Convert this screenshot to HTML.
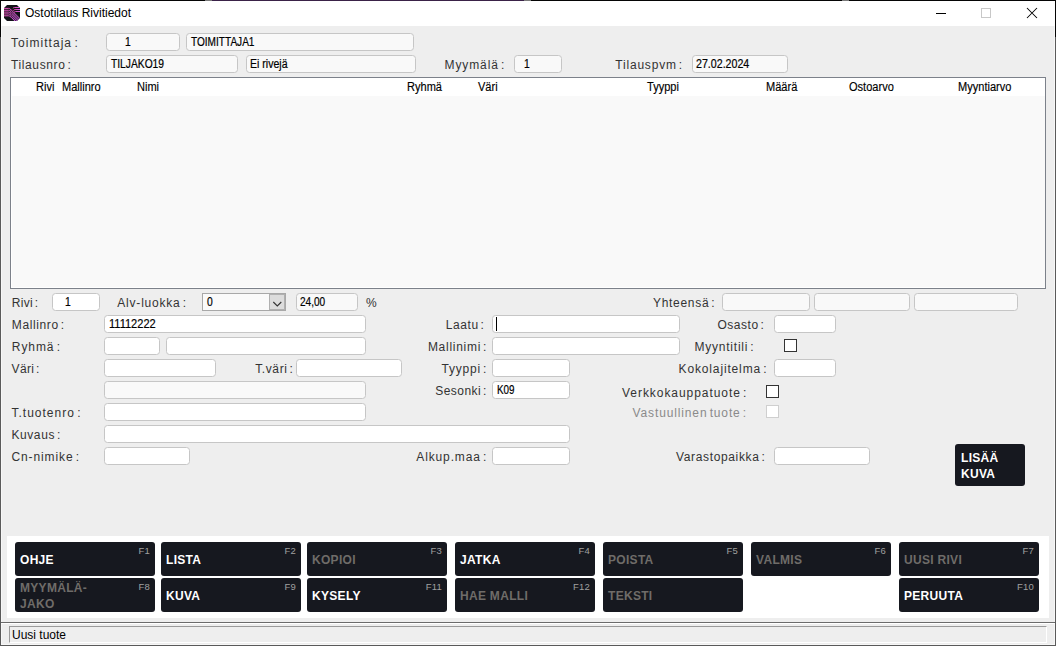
<!DOCTYPE html><html><head><meta charset="utf-8"><title>Ostotilaus Rivitiedot</title><style>
*{margin:0;padding:0;box-sizing:border-box}
html,body{width:1056px;height:646px;overflow:hidden;background:#eeeeee;font-family:"Liberation Sans",sans-serif}
div{position:absolute;white-space:nowrap}
.lbl{font-size:12px;line-height:14px;color:#333}
.dat{font-size:12px;line-height:14px;color:#000;-webkit-text-stroke:0.2px #000;transform-origin:0 0}
.hdr{transform-origin:0 0}
.hdr{font-size:12px;line-height:14px;color:#000;-webkit-text-stroke:0.15px #000}
.box{border:1px solid #c6c6c6;border-radius:3.5px;background:#fff}
.box.dis{background:#f9f9f9}
.chk{border:1px solid #333;background:#fff}
.btn{background:#16181f;border-radius:3px}
.bt{font-size:12px;line-height:16px;font-weight:bold;color:#fff;letter-spacing:0.3px}
.bt.d{color:#6f6c69}
.fk{font-size:9.5px;line-height:12px;color:#a0a0a0;letter-spacing:0.2px}
</style></head><body>
<div style="left:0;top:0;width:1056px;height:646px;border:1px solid #5a5a5a;border-top-color:#22102a"></div>
<div style="left:1px;top:644px;width:1054px;height:1px;background:#f7f7f7"></div>
<div style="left:0px;top:0;width:205px;height:1px;background:#050505"></div>
<div style="left:205px;top:0;width:7px;height:1px;background:#7a7a7a"></div>
<div style="left:212px;top:0;width:312px;height:1px;background:#3a2248"></div>
<div style="left:524px;top:0;width:7px;height:1px;background:#7a7a7a"></div>
<div style="left:531px;top:0;width:311px;height:1px;background:#050505"></div>
<div style="left:842px;top:0;width:7px;height:1px;background:#7a7a7a"></div>
<div style="left:849px;top:0;width:207px;height:1px;background:#050505"></div>
<div style="left:0;top:0;width:1px;height:37px;background:#050505"></div>
<div style="left:1055px;top:0;width:1px;height:37px;background:#050505"></div>
<div style="left:1px;top:1px;width:1054px;height:25px;background:#fff"></div>
<div style="left:1px;top:26px;width:1px;height:619px;background:#f7f7f7"></div>
<div style="left:1054px;top:26px;width:1px;height:619px;background:#f7f7f7"></div>
<svg style="position:absolute;left:4px;top:5px" width="16" height="16" viewBox="0 0 16 16">
<defs><linearGradient id="g" x1="0" x2="1" y1="0" y2="0"><stop offset="0" stop-color="#e64fb0"/><stop offset="1" stop-color="#cf5be9"/></linearGradient>
<clipPath id="c"><path d="M3 0 H13 L16 3 V13 L13 16 H3 L0 13 V3 Z"/></clipPath></defs>
<g clip-path="url(#c)"><rect x="0" y="0" width="16" height="16" fill="#121218"/>
<g fill="none" stroke="url(#g)" stroke-width="1.0">
<path d="M-0.5 3.40 L4.5 3.40 Q5.7 3.40 7.1 4.80 L18.8 16.5"/>
<path d="M-0.5 5.25 L4.5 5.25 Q5.7 5.25 7.1 6.65 L16.9 16.5"/>
<path d="M-0.5 7.10 L4.5 7.10 Q5.7 7.10 7.1 8.50 L15.1 16.5"/>
<path d="M-0.5 8.95 L4.5 8.95 Q5.7 8.95 7.1 10.35 L13.2 16.5"/>
<path d="M-0.5 10.80 L4.5 10.80 Q5.7 10.80 7.1 12.20 L11.4 16.5"/>
<path d="M16.5 2.5 L10.5 2.5 Q9.5 2.5 8.8 3.5"/>
<path d="M16.5 4.5 L11.1 4.5 Q10.1 4.5 9.4 5.5"/>
<path d="M16.5 6.5 L11.7 6.5 Q10.7 6.5 10.0 7.5"/>
</g></g></svg>
<div style="left:25px;top:6px;font-size:12px;line-height:14px;color:#000">Ostotilaus Rivitiedot</div>
<div style="left:936px;top:13px;width:10px;height:1px;background:#000"></div>
<div style="left:981px;top:8px;width:10px;height:10px;border:1px solid #c8c8c8"></div>
<svg style="position:absolute;left:1026px;top:7px" width="12" height="12" viewBox="0 0 12 12"><path d="M1 1 L11 11 M11 1 L1 11" stroke="#000" stroke-width="1.05"/></svg>
<div class="lbl" style="top:36px;left:11.00px;letter-spacing:1.036px;word-spacing:-2.0px;">Toimittaja :</div>
<div class="box dis" style="left:106px;top:33px;width:74px;height:18px"></div>
<div class="dat" style="left:124.5px;top:35px;transform:scaleX(0.86)">1</div>
<div class="box dis" style="left:186px;top:33px;width:228px;height:18px"></div>
<div class="dat" style="left:191px;top:35px;transform:scaleX(0.84)">TOIMITTAJA1</div>
<div class="lbl" style="top:58px;left:11.00px;letter-spacing:0.620px;word-spacing:-2.0px;">Tilausnro :</div>
<div class="box dis" style="left:106px;top:55px;width:132px;height:18px"></div>
<div class="dat" style="left:111px;top:57px;transform:scaleX(0.855)">TILJAKO19</div>
<div class="box dis" style="left:246px;top:55px;width:170px;height:18px"></div>
<div class="dat" style="left:250px;top:57px;transform:scaleX(0.88)">Ei rivejä</div>
<div class="lbl" style="top:58px;left:444.60px;letter-spacing:0.875px;word-spacing:-2.0px;">Myymälä :</div>
<div class="box dis" style="left:514px;top:55px;width:48px;height:18px"></div>
<div class="dat" style="left:524px;top:57px;transform:scaleX(0.86)">1</div>
<div class="lbl" style="top:58px;left:615.30px;letter-spacing:0.800px;word-spacing:-2.0px;">Tilauspvm :</div>
<div class="box dis" style="left:692px;top:55px;width:96px;height:18px"></div>
<div class="dat" style="left:696px;top:57px;transform:scaleX(0.887)">27.02.2024</div>
<div style="left:10px;top:77px;width:1036px;height:212px;border:1px solid #7c818a;background:#f9f9f9"></div>
<div style="left:11px;top:78px;width:1034px;height:18px;background:#fff"></div>
<div style="left:11px;top:96px;width:1px;height:192px;background:#fff"></div>
<div style="left:11px;top:287px;width:1034px;height:1px;background:#fff"></div>
<div class="hdr" style="left:36px;top:80px;transform:scaleX(0.92)">Rivi</div>
<div class="hdr" style="left:62px;top:80px;transform:scaleX(0.92)">Mallinro</div>
<div class="hdr" style="left:137px;top:80px;transform:scaleX(0.92)">Nimi</div>
<div class="hdr" style="left:407px;top:80px;transform:scaleX(0.92)">Ryhmä</div>
<div class="hdr" style="left:478px;top:80px;transform:scaleX(0.92)">Väri</div>
<div class="hdr" style="left:646.7px;top:80px;transform:scaleX(0.92)">Tyyppi</div>
<div class="hdr" style="left:766px;top:80px;transform:scaleX(0.92)">Määrä</div>
<div class="hdr" style="left:849px;top:80px;transform:scaleX(0.92)">Ostoarvo</div>
<div class="hdr" style="left:958px;top:80px;transform:scaleX(0.92)">Myyntiarvo</div>
<div class="lbl" style="top:296px;left:11.80px;letter-spacing:0.320px;word-spacing:-2.0px;">Rivi :</div>
<div class="box" style="left:52px;top:293px;width:48px;height:18px"></div>
<div class="dat" style="left:65px;top:295px;transform:scaleX(0.86)">1</div>
<div class="lbl" style="top:296px;left:117.30px;letter-spacing:0.791px;word-spacing:-2.0px;">Alv-luokka :</div>
<div style="left:202px;top:293px;width:84px;height:18px;border:1px solid #a8a8a8;background:#fafafa"></div>
<div style="left:269px;top:294px;width:16px;height:16px;border:1px solid #b0b0b0;background:#dcdcdc"></div>
<svg style="position:absolute;left:272px;top:299.5px" width="11" height="8" viewBox="0 0 11 8"><path d="M1.3 2 L5.3 6 L9.3 2" fill="none" stroke="#333" stroke-width="1.1"/></svg>
<div class="dat" style="left:207px;top:295px;transform:scaleX(0.86)">0</div>
<div class="box dis" style="left:296px;top:293px;width:62px;height:18px"></div>
<div class="dat" style="left:300px;top:295px;transform:scaleX(0.84)">24,00</div>
<div class="lbl" style="top:296px;left:366px;">%</div>
<div class="lbl" style="top:296px;left:653.00px;letter-spacing:0.700px;word-spacing:-2.0px;">Yhteensä :</div>
<div class="box dis" style="left:722px;top:293px;width:88px;height:18px"></div>
<div class="box dis" style="left:814px;top:293px;width:96px;height:18px"></div>
<div class="box dis" style="left:914px;top:293px;width:104px;height:18px"></div>
<div class="lbl" style="top:318px;left:11.80px;letter-spacing:0.622px;word-spacing:-2.0px;">Mallinro :</div>
<div class="box" style="left:104px;top:315px;width:262px;height:18px"></div>
<div class="dat" style="left:108.5px;top:317px;transform:scaleX(0.92)">11112222</div>
<div class="lbl" style="top:318px;left:445.80px;letter-spacing:0.567px;word-spacing:-2.0px;">Laatu :</div>
<div class="box" style="left:492px;top:315px;width:188px;height:18px"></div>
<div style="left:496px;top:317px;width:1px;height:14px;background:#000"></div>
<div class="lbl" style="top:318px;left:717.40px;letter-spacing:0.529px;word-spacing:-2.0px;">Osasto :</div>
<div class="box" style="left:774px;top:315px;width:62px;height:18px"></div>
<div class="lbl" style="top:340px;left:11.80px;letter-spacing:0.933px;word-spacing:-2.0px;">Ryhmä :</div>
<div class="box" style="left:104px;top:337px;width:56px;height:18px"></div>
<div class="box" style="left:166px;top:337px;width:200px;height:18px"></div>
<div class="lbl" style="top:340px;left:427.90px;letter-spacing:0.720px;word-spacing:-2.0px;">Mallinimi :</div>
<div class="box" style="left:492px;top:337px;width:188px;height:18px"></div>
<div class="lbl" style="top:340px;left:694.50px;letter-spacing:0.773px;word-spacing:-2.0px;">Myyntitili :</div>
<div class="chk" style="left:784px;top:339px;width:13px;height:13px"></div>
<div class="lbl" style="top:362px;left:11.50px;letter-spacing:0.380px;word-spacing:-2.0px;">Väri :</div>
<div class="box" style="left:104px;top:359px;width:112px;height:18px"></div>
<div class="lbl" style="top:362px;left:255.20px;letter-spacing:0.614px;word-spacing:-2.0px;">T.väri :</div>
<div class="box" style="left:296px;top:359px;width:106px;height:18px"></div>
<div class="lbl" style="top:362px;left:441.50px;letter-spacing:0.786px;word-spacing:-2.0px;">Tyyppi :</div>
<div class="box" style="left:492px;top:359px;width:78px;height:18px"></div>
<div class="lbl" style="top:362px;left:678.60px;letter-spacing:0.850px;word-spacing:-2.0px;">Kokolajitelma :</div>
<div class="box" style="left:774px;top:359px;width:62px;height:18px"></div>
<div class="box dis" style="left:104px;top:381px;width:262px;height:18px"></div>
<div class="lbl" style="top:384px;left:435.30px;letter-spacing:0.450px;word-spacing:-2.0px;">Sesonki :</div>
<div class="box" style="left:492px;top:381px;width:78px;height:18px"></div>
<div class="dat" style="left:496.5px;top:383px;transform:scaleX(0.82)">K09</div>
<div class="lbl" style="top:386px;left:622.10px;letter-spacing:0.939px;word-spacing:-2.0px;">Verkkokauppatuote :</div>
<div class="chk" style="left:766px;top:385px;width:13px;height:13px"></div>
<div class="lbl" style="top:406px;left:11.50px;letter-spacing:1.000px;word-spacing:-2.0px;">T.tuotenro :</div>
<div class="box" style="left:104px;top:403px;width:262px;height:18px"></div>
<div class="lbl" style="top:406px;left:632.60px;letter-spacing:0.863px;word-spacing:-2.0px;color:#8a8a8a">Vastuullinen tuote :</div>
<div class="chk" style="left:766px;top:405px;width:13px;height:13px;border-color:#cfcfcf"></div>
<div class="lbl" style="top:428px;left:11.40px;letter-spacing:0.600px;word-spacing:-2.0px;">Kuvaus :</div>
<div class="box" style="left:104px;top:425px;width:466px;height:18px"></div>
<div class="lbl" style="top:450px;left:11.40px;letter-spacing:0.910px;word-spacing:-2.0px;">Cn-nimike :</div>
<div class="box" style="left:104px;top:447px;width:86px;height:18px"></div>
<div class="lbl" style="top:450px;left:416.30px;letter-spacing:0.870px;word-spacing:-2.0px;">Alkup.maa :</div>
<div class="box" style="left:492px;top:447px;width:78px;height:18px"></div>
<div class="lbl" style="top:450px;left:676.00px;letter-spacing:0.643px;word-spacing:-2.0px;">Varastopaikka :</div>
<div class="box" style="left:774px;top:447px;width:96px;height:18px"></div>
<div class="btn" style="left:955px;top:444px;width:70px;height:42px"></div>
<div class="bt" style="left:961px;top:450px">LISÄÄ<br>KUVA</div>
<div style="left:7px;top:536px;width:1042px;height:82px;background:#fff"></div>
<div class="btn" style="left:15px;top:542px;width:140px;height:34px"></div>
<div class="bt" style="left:20px;top:552px">OHJE</div>
<div class="fk" style="right:906px;top:545px">F1</div>
<div class="btn" style="left:161px;top:542px;width:140px;height:34px"></div>
<div class="bt" style="left:166px;top:552px">LISTA</div>
<div class="fk" style="right:760px;top:545px">F2</div>
<div class="btn" style="left:307px;top:542px;width:140px;height:34px"></div>
<div class="bt d" style="left:312px;top:552px">KOPIOI</div>
<div class="fk" style="right:614px;top:545px">F3</div>
<div class="btn" style="left:455px;top:542px;width:140px;height:34px"></div>
<div class="bt" style="left:460px;top:552px">JATKA</div>
<div class="fk" style="right:466px;top:545px">F4</div>
<div class="btn" style="left:603px;top:542px;width:140px;height:34px"></div>
<div class="bt d" style="left:608px;top:552px">POISTA</div>
<div class="fk" style="right:318px;top:545px">F5</div>
<div class="btn" style="left:751px;top:542px;width:140px;height:34px"></div>
<div class="bt d" style="left:756px;top:552px">VALMIS</div>
<div class="fk" style="right:170px;top:545px">F6</div>
<div class="btn" style="left:899px;top:542px;width:140px;height:34px"></div>
<div class="bt d" style="left:904px;top:552px">UUSI RIVI</div>
<div class="fk" style="right:22px;top:545px">F7</div>
<div class="btn" style="left:15px;top:578px;width:140px;height:34px"></div>
<div class="bt d" style="left:20px;top:580px">MYYMÄLÄ-<br>JAKO</div>
<div class="fk" style="right:906px;top:581px">F8</div>
<div class="btn" style="left:161px;top:578px;width:140px;height:34px"></div>
<div class="bt" style="left:166px;top:588px">KUVA</div>
<div class="fk" style="right:760px;top:581px">F9</div>
<div class="btn" style="left:307px;top:578px;width:140px;height:34px"></div>
<div class="bt" style="left:312px;top:588px">KYSELY</div>
<div class="fk" style="right:614px;top:581px">F11</div>
<div class="btn" style="left:455px;top:578px;width:140px;height:34px"></div>
<div class="bt d" style="left:460px;top:588px">HAE MALLI</div>
<div class="fk" style="right:466px;top:581px">F12</div>
<div class="btn" style="left:603px;top:578px;width:140px;height:34px"></div>
<div class="bt d" style="left:608px;top:588px">TEKSTI</div>
<div class="btn" style="left:899px;top:578px;width:140px;height:34px"></div>
<div class="bt" style="left:904px;top:588px">PERUUTA</div>
<div class="fk" style="right:22px;top:581px">F10</div>
<div style="left:1px;top:622px;width:1054px;height:1px;background:#6b6b6b"></div>
<div style="left:1px;top:623px;width:1054px;height:1px;background:#fff"></div>
<div style="left:9px;top:626px;width:1038px;height:17px;border-top:1px solid #9a9a9a;border-left:1px solid #9a9a9a;border-right:1px solid #fff;border-bottom:1px solid #fff"></div>
<div style="left:12px;top:628px;font-size:12px;line-height:14px;color:#000">Uusi tuote</div>
</body></html>
